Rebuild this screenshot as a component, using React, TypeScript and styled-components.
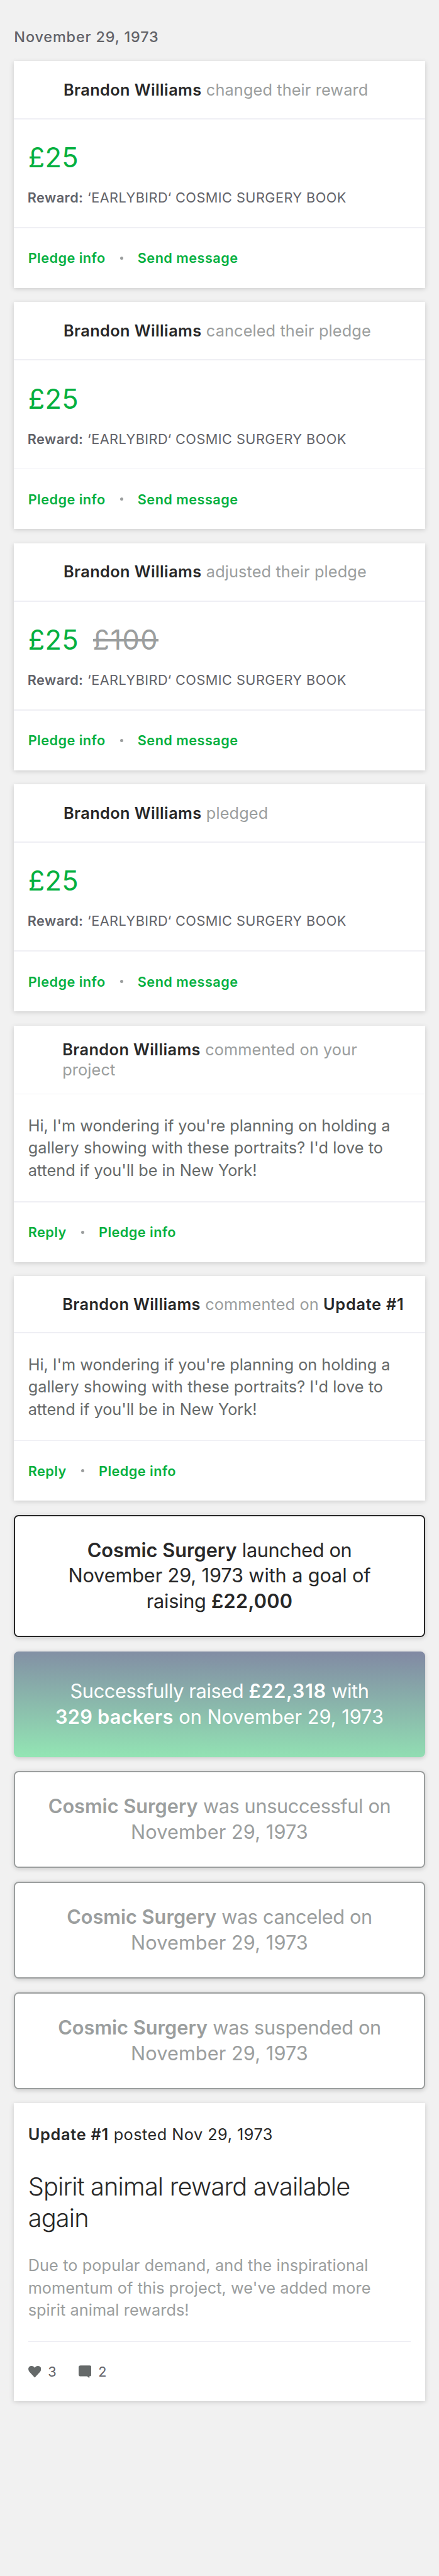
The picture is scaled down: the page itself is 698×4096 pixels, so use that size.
import React from "react";
import styled, { createGlobalStyle } from "styled-components";

const SCALE = 0.9308;
const u = (n: number) => `${Math.round(n * SCALE * 1000) / 1000}px`;

const color = {
  page: "#f1f1f1",
  rule: "#efeff4",
  ink: "#282828",
  text: "#656969",
  slate: "#626369",
  muted: "#9b9e9e",
  green: "#05b03f",
};

const GlobalStyle = createGlobalStyle`
  *, *::before, *::after { box-sizing: border-box; }
  html, body { margin: 0; background: ${color.page}; }
  body {
    font-family: Inter, "Liberation Sans", sans-serif;
    -webkit-font-smoothing: antialiased;
  }
`;

const Page = styled.main`
  display: flex;
  flex-direction: column;
  min-height: 4096px;
  padding: ${u(48)} ${u(24)} 0;
  background: ${color.page};
`;

const DateHeading = styled.h1`
  margin: 0 0 ${u(25)};
  font-size: ${u(25.2)};
  font-weight: 500;
  line-height: ${u(31)};
  letter-spacing: ${u(0.9)};
  color: ${color.slate};
`;

const Feed = styled.div`
  display: flex;
  flex-direction: column;
  gap: ${u(24)};
`;

const Card = styled.article`
  background: #fff;
  box-shadow: 0 ${u(2)} ${u(8)} rgba(0, 0, 0, 0.17);
`;

const Rule = styled.div`
  height: ${u(2)};
  background: ${color.rule};
`;

const CardHeader = styled.header<{ $height: number; $indent: number }>`
  display: flex;
  align-items: center;
  height: ${(p) => u(p.$height)};
  padding-left: ${(p) => u(p.$indent)};
  font-size: ${u(27.2)};
  line-height: ${u(34)};
`;

const Headline = styled.p`
  margin: 0;
  letter-spacing: ${u(0.13)};
  color: ${color.muted};
  white-space: nowrap;
`;

const Name = styled.strong`
  font-weight: 600;
  letter-spacing: ${u(0.45)};
  color: ${color.ink};
`;

const UpdateRef = styled(Name)`
  letter-spacing: ${u(0.8)};
`;

const PledgeBody = styled.section`
  height: ${u(184)};
  padding: ${u(36.8)} ${u(24)} 0;
`;

const Amounts = styled.div`
  display: flex;
  gap: ${u(24.5)};
  font-size: ${u(46.6)};
  line-height: ${u(58)};
`;

const Amount = styled.span`
  letter-spacing: ${u(0.3)};
  color: ${color.green};
`;

const OldAmount = styled.s`
  position: relative;
  letter-spacing: ${u(1.5)};
  text-decoration: none;
  color: ${color.muted};

  &::after {
    content: "";
    position: absolute;
    left: 0;
    right: 0;
    top: 50%;
    height: ${u(4)};
    margin-top: ${u(-2)};
    background: ${color.muted};
  }
`;

const Reward = styled.p`
  margin: ${u(24.7)} 0 0 ${u(-1)};
  font-size: ${u(23.3)};
  line-height: ${u(28)};
  letter-spacing: ${u(0.5)};
  color: ${color.slate};
  white-space: nowrap;
`;

const RewardLabel = styled.strong`
  font-weight: 600;
`;

const Actions = styled.footer`
  display: flex;
  align-items: center;
  height: ${u(102)};
  padding: 0 ${u(24)};
`;

const Action = styled.a`
  font-size: ${u(23.3)};
  font-weight: 600;
  letter-spacing: ${u(0.5)};
  color: ${color.green};
`;

const Bullet = styled.i`
  width: ${u(5.4)};
  height: ${u(5.4)};
  margin: 0 ${u(24.4)} 0 ${u(25.2)};
  border-radius: 50%;
  background: ${color.muted};
`;

const Message = styled.p`
  margin: 0;
  padding: ${u(34)} ${u(24)};
  font-size: ${u(27.2)};
  line-height: ${u(38)};
  color: ${color.text};
`;

const Line = styled.span<{ $tracking?: number }>`
  display: block;
  letter-spacing: ${(p) => u(p.$tracking ?? 0)};
  white-space: nowrap;
`;

const Notice = styled.article<{ $height: number; $tone: string }>`
  display: flex;
  flex-direction: column;
  justify-content: center;
  height: ${(p) => u(p.$height)};
  border: 2px solid ${(p) => p.$tone};
  border-radius: ${u(8)};
  background: #fff;
  box-shadow: 0 ${u(2)} ${u(8)} rgba(0, 0, 0, 0.17);
  color: ${(p) => p.$tone};
  font-size: ${u(33)};
  line-height: ${u(44)};
  text-align: center;
`;

const SuccessNotice = styled(Notice)`
  border: 0;
  background: linear-gradient(181.5deg, #8188a3, #93e6b4);
`;

const Strong = styled.strong<{ $tracking?: number }>`
  font-weight: 600;
  letter-spacing: ${(p) => u(p.$tracking ?? 0)};
`;

const UpdateCard = styled(Card)`
  padding: ${u(36)} ${u(24)} 0;
`;

const UpdateMeta = styled.p`
  margin: 0;
  font-size: ${u(27.2)};
  line-height: ${u(34)};
  letter-spacing: ${u(0.5)};
  color: ${color.ink};
`;

const UpdateTitle = styled.h2`
  margin: ${u(47.4)} 0 0;
  font-size: ${u(42.7)};
  font-weight: 300;
  line-height: ${u(53.3)};
  letter-spacing: ${u(-0.9)};
  color: ${color.ink};
`;

const UpdateText = styled.p`
  margin: ${u(34)} 0;
  font-size: ${u(27.2)};
  line-height: ${u(38)};
  color: ${color.muted};
`;

const Stats = styled.footer`
  display: flex;
  align-items: center;
  gap: ${u(37.5)};
  height: ${u(101)};
`;

const Stat = styled.span`
  display: flex;
  align-items: center;
  gap: ${u(12)};
  font-size: ${u(23.3)};
  line-height: ${u(28)};
  color: ${color.slate};

  svg {
    width: ${u(22)};
    height: ${u(22)};
    fill: ${color.text};
  }
`;

const HeartIcon = () => (
  <svg viewBox="0 0 22 22">
    <path d="M11 21 L2 11.2 C-2.2 5.6 1.2 1 5.6 1 C8.4 1 10.2 2.7 11 4.4 C11.8 2.7 13.6 1 16.4 1 C20.8 1 24.2 5.6 20 11.2 Z" />
  </svg>
);

const CommentIcon = () => (
  <svg viewBox="0 0 22 22">
    <path d="M3.4 0.4 H18.6 Q22 0.4 22 3.6 V15.4 Q22 18.6 18.4 18.9 V22 L14.6 18.9 H3.4 Q0 18.9 0 15.6 V3.6 Q0 0.4 3.4 0.4 Z" />
  </svg>
);

const ActionBar = ({ labels }: { labels: [string, string] }) => (
  <Actions>
    <Action>{labels[0]}</Action>
    <Bullet />
    <Action>{labels[1]}</Action>
  </Actions>
);

const PledgeCard = ({ event, previous }: { event: string; previous?: string }) => (
  <Card>
    <CardHeader $height={98} $indent={84.4}>
      <Headline>
        <Name>Brandon Williams</Name> {event}
      </Headline>
    </CardHeader>
    <Rule />
    <PledgeBody>
      <Amounts>
        <Amount>£25</Amount>
        {previous && <OldAmount>{previous}</OldAmount>}
      </Amounts>
      <Reward>
        <RewardLabel>Reward:</RewardLabel> ‘EARLYBIRD‘ COSMIC SURGERY BOOK
      </Reward>
    </PledgeBody>
    <Rule />
    <ActionBar labels={["Pledge info", "Send message"]} />
  </Card>
);

const CommentCard = ({ height, children }: { height: number; children: React.ReactNode }) => (
  <Card>
    <CardHeader $height={height} $indent={82.6}>
      <Headline>
        <Name>Brandon Williams</Name> {children}
      </Headline>
    </CardHeader>
    <Rule />
    <Message>
      <Line $tracking={-0.06}>Hi, I'm wondering if you're planning on holding a</Line>
      <Line $tracking={0.05}>gallery showing with these portraits? I'd love to</Line>
      <Line>attend if you'll be in New York!</Line>
    </Message>
    <Rule />
    <ActionBar labels={["Reply", "Pledge info"]} />
  </Card>
);

const ClosedNotice = ({ outcome }: { outcome: string }) => (
  <Notice $height={165} $tone={color.muted}>
    <Line $tracking={-0.4}>
      <Strong>Cosmic Surgery</Strong> was {outcome} on
    </Line>
    <Line $tracking={0.08}>November 29, 1973</Line>
  </Notice>
);

export default function App() {
  return (
    <>
      <GlobalStyle />
      <Page>
        <DateHeading>November 29, 1973</DateHeading>
        <Feed>
          <PledgeCard event="changed their reward" />
          <PledgeCard event="canceled their pledge" />
          <PledgeCard event="adjusted their pledge" previous="£100" />
          <PledgeCard event="pledged" />
          <CommentCard height={116}>
            commented on your
            <br />
            project
          </CommentCard>
          <CommentCard height={96}>
            commented on <UpdateRef>Update #1</UpdateRef>
          </CommentCard>
          <Notice $height={209} $tone={color.ink}>
            <Line $tracking={-0.4}>
              <Strong>Cosmic Surgery</Strong> launched on
            </Line>
            <Line $tracking={-0.13}>November 29, 1973 with a goal of</Line>
            <Line $tracking={-0.3}>
              raising <Strong $tracking={0.3}>£22,000</Strong>
            </Line>
          </Notice>
          <SuccessNotice $height={181} $tone="#fff">
            <Line $tracking={-0.4}>
              Successfully raised <Strong $tracking={0.7}>£22,318</Strong> with
            </Line>
            <Line>
              <Strong $tracking={0.25}>329 backers</Strong> on November 29, 1973
            </Line>
          </SuccessNotice>
          <ClosedNotice outcome="unsuccessful" />
          <ClosedNotice outcome="canceled" />
          <ClosedNotice outcome="suspended" />
          <UpdateCard>
            <UpdateMeta>
              <Strong $tracking={0.8}>Update #1</Strong> posted Nov 29, 1973
            </UpdateMeta>
            <UpdateTitle>
              Spirit animal reward available
              <br />
              again
            </UpdateTitle>
            <UpdateText>
              <Line $tracking={0.11}>Due to popular demand, and the inspirational</Line>
              <Line $tracking={0.06}>momentum of this project, we've added more</Line>
              <Line $tracking={0.06}>spirit animal rewards!</Line>
            </UpdateText>
            <Rule />
            <Stats>
              <Stat>
                <HeartIcon />3
              </Stat>
              <Stat>
                <CommentIcon />2
              </Stat>
            </Stats>
          </UpdateCard>
        </Feed>
      </Page>
    </>
  );
}
